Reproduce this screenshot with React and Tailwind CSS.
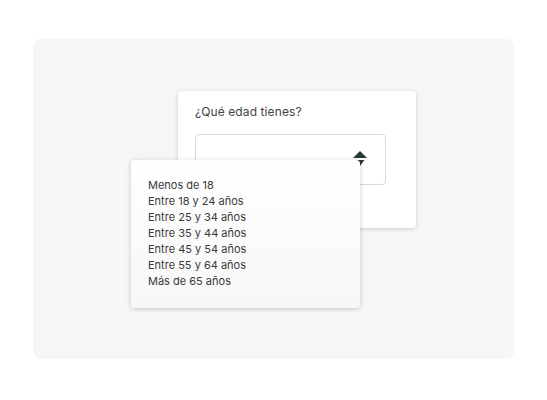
const options = [
  'Menos de 18',
  'Entre 18 y 24 años',
  'Entre 25 y 34 años',
  'Entre 35 y 44 años',
  'Entre 45 y 54 años',
  'Entre 55 y 64 años',
  'Más de 65 años',
];

function SortArrows() {
  return (
    <svg width="14" height="18" viewBox="0 0 14 18" aria-hidden="true">
      <path d="M7 0 L14 7 L0 7 Z" fill="#263838" />
      <path d="M2.5 9 L11.5 9 L7 15 Z" fill="#263838" />
    </svg>
  );
}

export default function App() {
  return (
    <div className="min-h-[400px] bg-white pl-[33px] pt-[39px] font-['Inter',sans-serif]">
      <div className="relative h-[320px] w-[481px] rounded-lg bg-[#f6f6f6] pl-[145px] pt-[52px]">
        <div className="h-[137px] w-[238px] rounded-[4px] bg-white px-[17px] pt-[12px] shadow-[0_1px_4px_rgba(0,0,0,0.18)]">
          <p className="text-[12px] leading-[18px] tracking-[0.1px] text-[#444]">¿Qué edad tienes?</p>
          <div className="mt-[13px] flex h-[51px] w-[191px] items-center justify-end rounded-[4px] border border-[#d9d9d9] pr-[18px]">
            <SortArrows />
          </div>
        </div>

        <div className="absolute left-[98px] top-[121px] h-[148px] w-[229px] rounded-[4px] bg-gradient-to-b from-white to-[#f7f7f7] pl-[17px] pt-[17px] shadow-[0_1px_5px_rgba(0,0,0,0.2)]">
          <ul className="text-[11px] leading-[16px] text-[#3a3a3a]">
            {options.map((o) => (
              <li key={o}>{o}</li>
            ))}
          </ul>
        </div>
      </div>
    </div>
  );
}
